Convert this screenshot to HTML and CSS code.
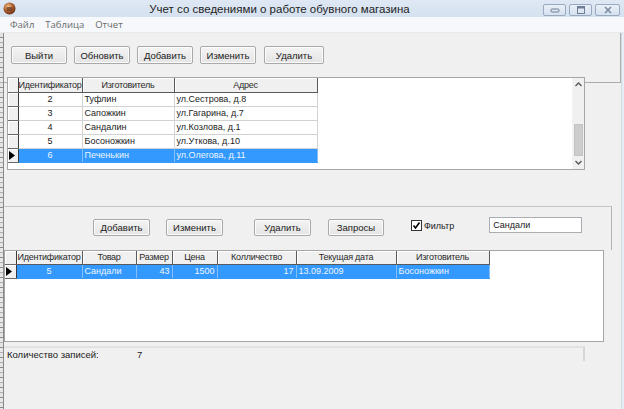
FILE: index.html
```html
<!DOCTYPE html>
<html lang="ru">
<head>
<meta charset="utf-8">
<title>Учет со сведениями о работе обувного магазина</title>
<link rel="stylesheet" href="styles.css">
</head>
<body>
<div class="window">
  <div class="titlebar">
    <div class="app-icon">
      <svg width="13" height="13" viewBox="0 0 13 13"><defs><radialGradient id="g" cx="40%" cy="35%" r="70%"><stop offset="0" stop-color="#f3c58a"/><stop offset="0.6" stop-color="#a4552a"/><stop offset="1" stop-color="#5a2a14"/></radialGradient></defs><circle cx="6.5" cy="6.5" r="6" fill="url(#g)"/><rect x="3.5" y="5" width="6" height="4" rx="1" fill="#6b3b1e" opacity="0.7"/></svg>
    </div>
    <div class="title">Учет со сведениями о работе обувного магазина</div>
    <div class="controls">
      <div class="ctl ctl-min"><svg width="10" height="6" viewBox="0 0 10 6"><rect x="1" y="2" width="8" height="3" rx="1" fill="none" stroke="#6e7f96" stroke-width="1"/></svg></div>
      <div class="ctl ctl-max"><svg width="10" height="8" viewBox="0 0 10 8"><rect x="1.5" y="0.5" width="7" height="7" fill="none" stroke="#6e7f96" stroke-width="1"/><rect x="1.5" y="0.5" width="7" height="2" fill="#6e7f96"/></svg></div>
      <div class="ctl ctl-close"><svg width="10" height="8" viewBox="0 0 10 8"><path d="M2 1 L8 7 M8 1 L2 7" stroke="#7a8aa0" stroke-width="1.6"/></svg></div>
    </div>
  </div>
  <div class="menubar">
    <span class="menu-item">Файл</span>
    <span class="menu-item">Таблица</span>
    <span class="menu-item">Отчет</span>
  </div>
  <div class="frame">
    <div class="lframe"></div>
    <div class="client">
      <div class="top-panel">
        <button class="btn">Выйти</button>
        <button class="btn">Обновить</button>
        <button class="btn">Добавить</button>
        <button class="btn">Изменить</button>
        <button class="btn btn-wide">Удалить</button>
      </div>

      <div class="grid grid1">
        <table>
          <colgroup><col class="c-ind"><col class="w64"><col class="w92"><col class="w143"><col></colgroup>
          <tr class="hdr"><th class="ind"></th><th>Идентификатор</th><th>Изготовитель</th><th>Адрес</th><th class="empty"></th></tr>
          <tr><td class="ind"></td><td class="ctr">2</td><td>Туфлин</td><td>ул.Сестрова, д.8</td><td class="empty"></td></tr>
          <tr><td class="ind"></td><td class="ctr">3</td><td>Сапожкин</td><td>ул.Гагарина, д.7</td><td class="empty"></td></tr>
          <tr><td class="ind"></td><td class="ctr">4</td><td>Сандалин</td><td>ул.Козлова, д.1</td><td class="empty"></td></tr>
          <tr><td class="ind"></td><td class="ctr">5</td><td>Босоножкин</td><td>ул.Уткова, д.10</td><td class="empty"></td></tr>
          <tr class="sel"><td class="ind"><svg width="6" height="9" viewBox="0 0 6 9"><path d="M0 0 L6 4.5 L0 9 Z" fill="#000"/></svg></td><td class="ctr">6</td><td>Печенькин</td><td>ул.Олегова, д.11</td><td class="empty"></td></tr>
        </table>
        <div class="vscroll">
          <div class="arrow">
            <svg width="7" height="5" viewBox="0 0 7 5"><path d="M0.5 4 L3.5 1 L6.5 4" fill="none" stroke="#555" stroke-width="1.3"/></svg>
          </div>
          <div class="track"><div class="thumb"></div></div>
          <div class="arrow">
            <svg width="7" height="5" viewBox="0 0 7 5"><path d="M0.5 1 L3.5 4 L6.5 1" fill="none" stroke="#555" stroke-width="1.3"/></svg>
          </div>
        </div>
      </div>

      <div class="mid-panel">
        <button class="btn b-add">Добавить</button>
        <button class="btn b-edit">Изменить</button>
        <button class="btn b-del">Удалить</button>
        <button class="btn b-query">Запросы</button>
        <label class="chk"><span class="box"><svg width="9" height="9" viewBox="0 0 9 9"><path d="M1.5 4.5 L3.5 7 L7.5 1.5" fill="none" stroke="#000" stroke-width="1.6"/></svg></span>Фильтр</label>
        <div class="edit">Сандали</div>
      </div>

      <div class="grid grid2">
        <table>
          <colgroup><col class="c-ind2"><col class="w66"><col class="w54"><col class="w36"><col class="w45"><col class="w79"><col class="w100"><col class="w93"><col></colgroup>
          <tr class="hdr"><th class="ind"></th><th>Идентификатор</th><th>Товар</th><th>Размер</th><th>Цена</th><th>Колличество</th><th>Текущая дата</th><th>Изготовитель</th><th class="empty"></th></tr>
          <tr class="sel"><td class="ind"><svg width="6" height="9" viewBox="0 0 6 9"><path d="M0 0 L6 4.5 L0 9 Z" fill="#000"/></svg></td><td class="ctr">5</td><td>Сандали</td><td class="rt">43</td><td class="rt">1500</td><td class="rt">17</td><td>13.09.2009</td><td>Босоножкин</td><td class="empty"></td></tr>
        </table>
      </div>

      <div class="status">
        <span class="st-label">Количество записей:</span>
        <span class="st-value">7</span>
      </div>
    </div>
    <div class="rframe"></div>
  </div>
</div>
</body>
</html>
```

FILE: styles.css
```css
* { box-sizing: border-box; }
html, body { margin: 0; padding: 0; background: #f0f0f0; }
body { width: 624px; height: 409px; overflow: hidden; font-family: "Liberation Sans", Arial, sans-serif; }

.window { width: 624px; height: 409px; display: flex; flex-direction: column; background: #f0f0f0; }

/* title bar */
.titlebar { height: 17px; display: flex; align-items: center; background: linear-gradient(#dfe8f4, #d5e1ef); }
.app-icon { width: 13px; height: 13px; margin-left: 3px; display: flex; }
.title { flex: 1; text-align: center; font-family: "Liberation Sans", Arial, sans-serif; font-size: 11.5px; color: #1e1e1e; line-height: 17px; padding-top: 1px; }
.controls { display: flex; align-items: center; gap: 3px; margin-right: 4px; padding-top: 2px; }
.ctl { width: 23px; height: 12px; border: 1px solid #98a9c0; border-radius: 2px; background: linear-gradient(#e9f0f8, #d6e1ee); display: flex; align-items: center; justify-content: center; }
.ctl-close { width: 25px; }

/* menu */
.menubar { height: 16px; display: flex; align-items: center; background: #f6f8fb; border-bottom: 1px solid #e6e9ee; padding-left: 10px; }
.menu-item { font-family: "Open Sans", "Noto Sans", sans-serif; font-size: 9.5px; color: #6a6a6a; margin-right: 11px; }

/* frame */
.frame { flex: 1; display: flex; min-height: 0; }
.lframe { width: 4px; background: repeating-linear-gradient(#e4e4e4 0 4px, #8a8a8a 4px 5px, #e8e8e8 5px 9px, #b0b0b0 9px 10px); border-right: 1px solid #8a8a8a; }
.client { width: 617px; background: #f0f0f0; display: flex; flex-direction: column; }
.rframe { flex: 1; background: #e6edf5; border-left: 1px solid #d3dbe5; }

/* buttons */
.btn { font-family: "Liberation Sans", Arial, sans-serif; font-size: 9.5px; color: #1a1a1a; height: 18px; width: 56px; padding: 0; border: 1px solid #a9a9a9; border-radius: 2px; background: linear-gradient(#f4f4f4, #e4e4e4); box-shadow: inset 0 0 0 1px #fbfbfb; }

.top-panel { width: 617px; height: 50px; border-right: 1px solid #ababab; border-bottom: 1px solid #ababab; display: flex; gap: 7px; padding: 13px 0 0 7px; align-items: flex-start; }
.btn-wide { width: 60px; margin-left: 1px; }

/* grids */
.grid { background: #fff; border: 1px solid #a6a6a6; position: relative; display: flex; }
.grid table { border-collapse: collapse; table-layout: fixed; font-size: 9px; color: #1c1c1c; align-self: flex-start; }
.grid td, .grid th { padding: 0 2px; white-space: nowrap; overflow: hidden; font-weight: normal; }
.grid th { height: 14px; padding: 0; letter-spacing: -0.25px; background: #f0f0f0; border-right: 1px solid #5a5a5a; border-bottom: 1px solid #5a5a5a; box-shadow: inset 1px 1px 0 #ffffff; color: #2a2a2a; text-align: center; }
.grid td { height: 14px; border-right: 1px solid #d2d2d2; border-bottom: 1px solid #d2d2d2; }
.grid td.ind, .grid th.ind { background: #f0f0f0; border-right: 1px solid #3a3a3a; border-bottom: 1px solid #6a6a6a; box-shadow: inset 1px 1px 0 #fff; padding: 0; }
.grid td.ind svg { display: block; margin-left: 1px; }
.grid .empty { border: none; box-shadow: none; background: transparent; }
.grid .ctr { text-align: center; }
.grid .rt { text-align: right; }
.grid tr.sel td:not(.ind):not(.empty) { background: #3399ff; color: #eef6ff; border-right-color: #86bff7; border-bottom-color: #3399ff; }

.w36 { width: 36px; } .w45 { width: 45px; } .w54 { width: 54px; } .w64 { width: 64px; } .w66 { width: 66px; }
.w79 { width: 79px; } .w92 { width: 92px; } .w93 { width: 93px; } .w100 { width: 100px; } .w143 { width: 143px; }

.grid1 { width: 578px; height: 93px; margin-left: 3px; margin-top: -6px; }
.grid1 table { width: 563px; }
.grid1 col.c-ind { width: 10px; }
.grid1 .vscroll { margin-left: auto; width: 12px; height: 91px; background: #f0f0f0; display: flex; flex-direction: column; border-left: 1px solid #f4f4f4; }
.vscroll .arrow { height: 13px; display: flex; align-items: center; justify-content: center; }
.vscroll .track { flex: 1; display: flex; flex-direction: column; justify-content: flex-end; }
.vscroll .thumb { height: 32px; margin: 0 1px; background: #cdcdcd; border: 1px solid #c4c4c4; }

.mid-panel { margin-top: 36px; width: 608px; height: 44px; border-top: 1px solid #c4c4c4; border-right: 1px solid #b4b4b4; display: flex; align-items: flex-start; padding-top: 12px; }
.mid-panel .btn { height: 17px; width: 57px; }
.b-add { margin-left: 89px; }
.b-edit { margin-left: 16px; }
.b-del { margin-left: 31px; }
.mid-panel .b-query { margin-left: 17px; width: 56px; }
.chk { display: flex; align-items: center; margin-left: 27px; margin-top: 1px; font-size: 9px; color: #1a1a1a; }
.chk .box { width: 11px; height: 11px; background: #fff; border: 1px solid #333; margin-right: 2px; display: flex; align-items: center; justify-content: center; }
.edit { margin-left: 35px; margin-top: -2px; width: 93px; height: 16px; background: #fff; border: 1px solid #abadb3; font-size: 9px; padding: 2px 3px; color: #1a1a1a; }

.grid2 { width: 600px; height: 92px; }
.grid2 table { width: 598px; }
.grid2 col.c-ind2 { width: 11px; }
.grid2 th { height: 13px; }

/* status */
.status { margin-top: 4px; width: 581px; height: 15px; border-top: 2px solid #e2e2e2; border-right: 2px solid #d6d6d6; display: flex; align-items: center; font-size: 9.5px; color: #1a1a1a; }
.st-label { margin-left: 3px; width: 130px; }
```
